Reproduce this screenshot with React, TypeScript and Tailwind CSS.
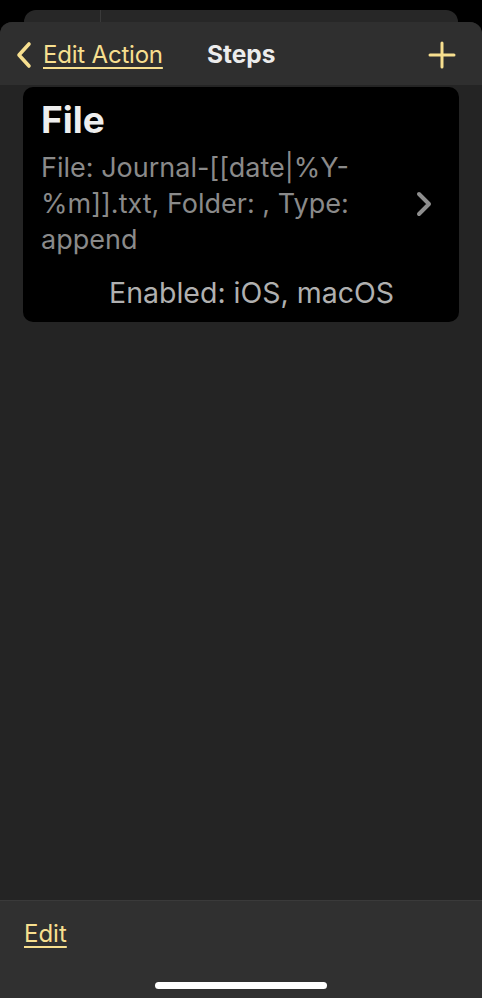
export default function App() {
    return (
        <div className="w-[482px] h-[998px] bg-black flex flex-col overflow-hidden font-['Inter','Liberation_Sans',sans-serif]">
            <div className="h-[10px] shrink-0" />
            <div className="mx-[24px] h-[12px] shrink-0 rounded-t-[12px] bg-[#272727] flex">
                <div className="w-[77px] border-r border-[#3a3a3a]" />
            </div>
            <div className="flex-1 flex flex-col rounded-t-[12px] bg-[#242424] overflow-hidden">
                <div className="h-[63px] shrink-0 bg-[#2f2f2f] flex items-center px-[14px] pt-[2px]">
                    <div className="flex items-center w-[160px]">
                        <svg width="20" height="28" viewBox="0 0 20 28" className="mr-[9px]">
                            <path d="M15 3 L5 14 L15 25" fill="none" stroke="#f7df8f" strokeWidth="3.6" strokeLinecap="round" strokeLinejoin="round" />
                        </svg>
                        <span className="text-[24px] text-[#f7df8f] underline underline-offset-[4px] decoration-[1.5px] tracking-[-0.2px] whitespace-nowrap">Edit Action</span>
                    </div>
                    <div className="flex-1 pl-[33px]">
                        <span className="text-[24.5px] font-bold text-[#ececec]">Steps</span>
                    </div>
                    <svg width="28" height="28" viewBox="0 0 28 28" className="mr-[12px]">
                        <path d="M14 2 V26 M2 14 H26" stroke="#f7df8f" strokeWidth="3" strokeLinecap="round" />
                    </svg>
                </div>
                <div className="px-[23px] pt-[2px]">
                    <div className="bg-black rounded-[10px] pl-[18px] pr-[24px] pt-[12px] pb-[12px]">
                        <div className="text-[37px] font-bold text-[#eeeeee] leading-[42px]">File</div>
                        <div className="flex items-center mt-[9px]">
                            <div className="w-[345px] text-[27px] leading-[36px] text-[#8a8a8a]">
                                File: Journal-[[date|%Y-%m]].txt, Folder: , Type: append
                            </div>
                            <div className="flex-1 flex justify-end pr-[2px]">
                                <svg width="18" height="26" viewBox="0 0 18 26">
                                    <path d="M4 3 L14 13 L4 23" fill="none" stroke="#8e8e8e" strokeWidth="4" strokeLinecap="round" strokeLinejoin="round" />
                                </svg>
                            </div>
                        </div>
                        <div className="pl-[68px] pt-[18px] text-[28.5px] leading-[34px] text-[#b0b0b0] whitespace-nowrap">
                            Enabled: iOS, macOS
                        </div>
                    </div>
                </div>
                <div className="flex-1" />
                <div className="h-[98px] shrink-0 bg-[#303030] border-t border-[#3a3a3a] flex flex-col px-[24px]">
                    <div className="pt-[15px]">
                        <span className="text-[24px] text-[#f7df8f] underline underline-offset-[4px] decoration-[1.5px]">Edit</span>
                    </div>
                    <div className="flex-1" />
                    <div className="flex justify-center pb-[9px]">
                        <div className="w-[172px] h-[7px] rounded-full bg-white" />
                    </div>
                </div>
            </div>
        </div>
    );
}
